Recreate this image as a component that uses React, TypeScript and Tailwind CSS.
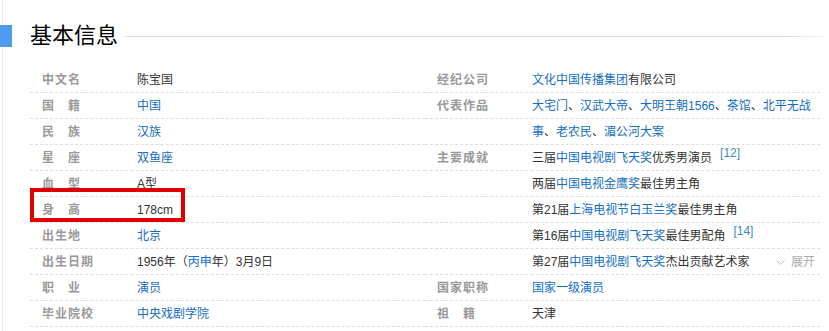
import React from "react";

type Seg = { t: string; link?: boolean };
type Row = { label?: string; value: Seg[]; sup?: string; expand?: boolean; boxed?: boolean };

const L = (t: string): Seg => ({ t, link: true });
const T = (t: string): Seg => ({ t });

const left: Row[] = [
  { label: "中文名", value: [T("陈宝国")] },
  { label: "国籍", value: [L("中国")] },
  { label: "民族", value: [L("汉族")] },
  { label: "星座", value: [L("双鱼座")] },
  { label: "血型", value: [T("A型")] },
  { label: "身高", value: [T("178cm")], boxed: true },
  { label: "出生地", value: [L("北京")] },
  { label: "出生日期", value: [T("1956年（"), L("丙申"), T("年）3月9日")] },
  { label: "职业", value: [L("演员")] },
  { label: "毕业院校", value: [L("中央戏剧学院")] },
];

const right: Row[] = [
  { label: "经纪公司", value: [L("文化中国传播集团"), T("有限公司")] },
  {
    label: "代表作品",
    value: [L("大宅门"), T("、"), L("汉武大帝"), T("、"), L("大明王朝1566"), T("、"), L("茶馆"), T("、"), L("北平无战")],
  },
  { value: [L("事"), T("、"), L("老农民"), T("、"), L("湄公河大案")] },
  { label: "主要成就", value: [T("三届"), L("中国电视剧飞天奖"), T("优秀男演员")], sup: "[12]" },
  { value: [T("两届"), L("中国电视金鹰奖"), T("最佳男主角")] },
  { value: [T("第21届"), L("上海电视节白玉兰奖"), T("最佳男主角")] },
  { value: [T("第16届"), L("中国电视剧飞天奖"), T("最佳男配角")], sup: "[14]" },
  { value: [T("第27届"), L("中国电视剧飞天奖"), T("杰出贡献艺术家")], expand: true },
  { label: "国家职称", value: [L("国家一级演员")] },
  { label: "祖籍", value: [T("天津")] },
];

function Label({ text }: { text?: string }) {
  if (!text) return <div className="w-[107px] shrink-0" />;
  const chars = Array.from(text);
  return (
    <div className="w-[107px] shrink-0 pl-[12px] font-bold text-[#999]">
      {chars.length === 2 ? (
        <span className="flex w-[38px] justify-between">
          <span>{chars[0]}</span>
          <span>{chars[1]}</span>
        </span>
      ) : (
        <span className="tracking-[1px]">{text}</span>
      )}
    </div>
  );
}

function InfoRow({ row }: { row: Row }) {
  return (
    <div className="relative flex h-[26px] items-center border-b border-dashed border-[#dedede] pt-[2px] text-[12px] leading-[23px]">
      <Label text={row.label} />
      <div className="flex flex-1 items-center whitespace-nowrap pr-[5px] text-[#333]">
        <span>
          {row.value.map((s, i) => (
            <span key={i} className={s.link ? "text-[#136ec2]" : ""}>
              {s.t}
            </span>
          ))}
        </span>
        {row.sup && (
          <span className="relative -top-[6px] ml-[8px] text-[12px] leading-[12px] text-[#3f88bf]">{row.sup}</span>
        )}
        {row.expand && (
          <span className="ml-auto flex items-center text-[#aaa]">
            <svg width="9" height="5" viewBox="0 0 9 5" className="mr-[6px]">
              <polyline points="0.5,0.5 4.5,4.5 8.5,0.5" fill="none" stroke="#bbb" strokeWidth="1" />
            </svg>
            <span>展开</span>
          </span>
        )}
      </div>
      {row.boxed && (
        <div className="pointer-events-none absolute -top-[9px] left-0 h-[34px] w-[155px] border-[4px] border-[#e00000]" />
      )}
    </div>
  );
}

export default function App() {
  return (
    <div
      className="flex h-[331px] w-[829px] overflow-hidden bg-white"
      style={{ fontFamily: '"Liberation Sans", "Noto Sans CJK SC", sans-serif' }}
    >
      <div className="w-[2px] shrink-0" />
      <div className="flex flex-1 flex-col border-l border-[#ececec]">
        <div className="-ml-[3px] mt-[25px] flex h-[22px] items-center">
          <div className="h-[22px] w-[12px] shrink-0 bg-[#4f9cee]" />
          <h2 className="ml-[18px] text-[22px] font-normal leading-[22px] text-black">基本信息</h2>
          <div className="ml-[7px] mr-[7px] h-px flex-1 bg-gradient-to-r from-[#e0e0e0] from-95% to-[#f4f4f4]" />
        </div>
        <div className="ml-[27px] mt-[20px] flex">
          <div className="w-[395px]">
            {left.map((r, i) => (
              <InfoRow key={i} row={r} />
            ))}
          </div>
          <div className="w-[395px]">
            {right.map((r, i) => (
              <InfoRow key={i} row={r} />
            ))}
          </div>
        </div>
      </div>
    </div>
  );
}
